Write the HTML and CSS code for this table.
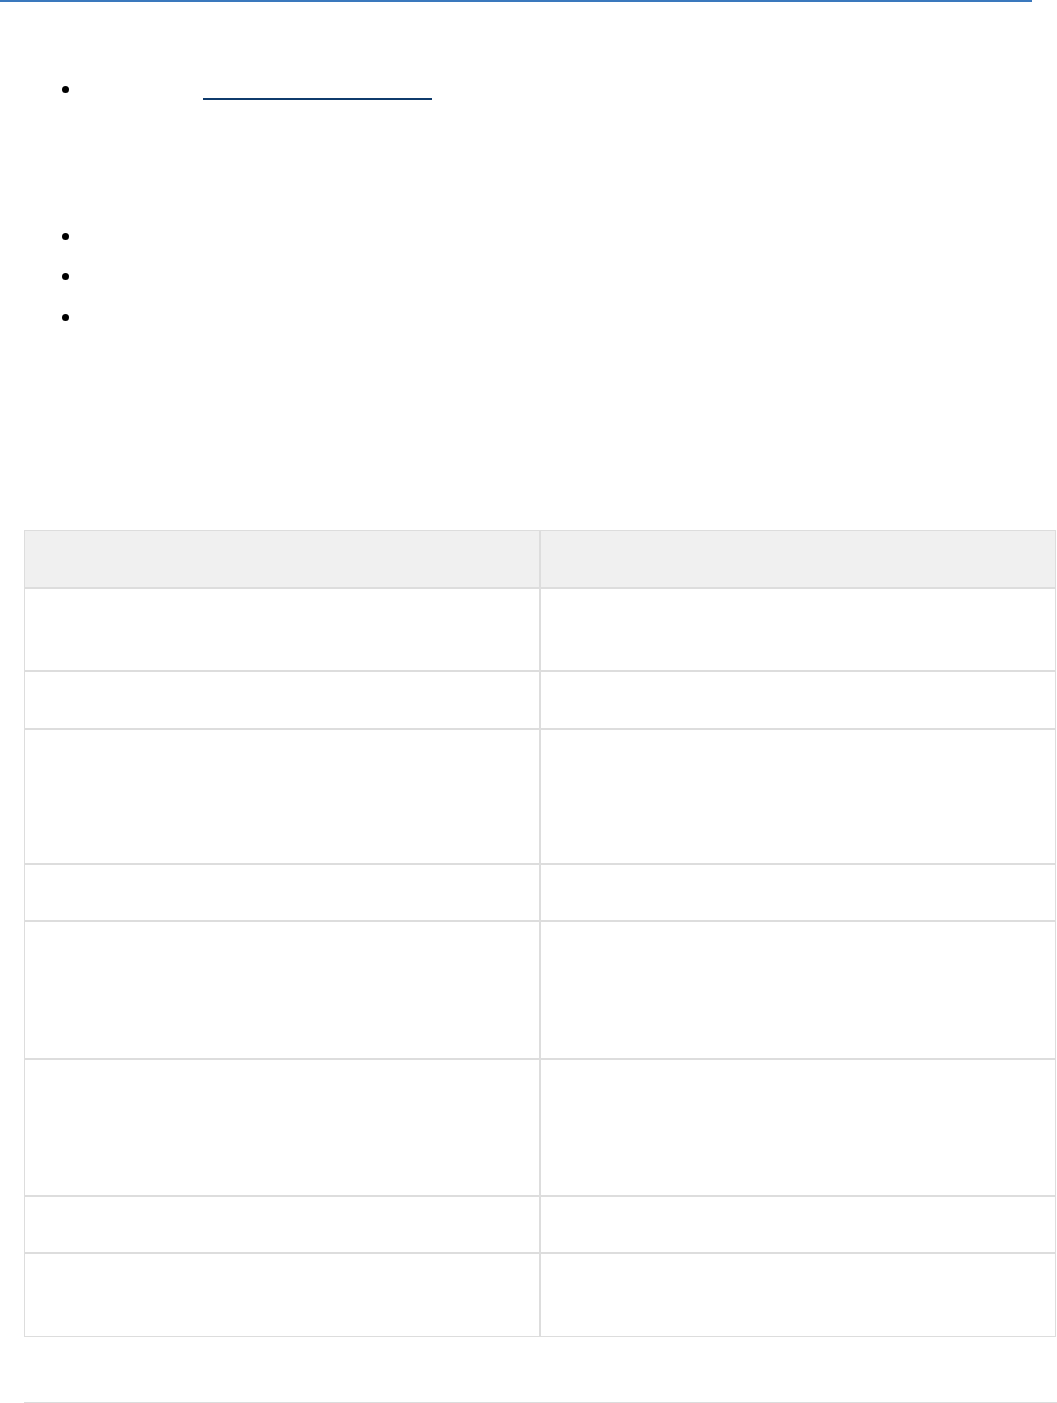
FILE: index.html
```html
<!DOCTYPE html>
<html lang="en">
<head>
<meta charset="utf-8">
<title>Page</title>
<link rel="stylesheet" href="styles.css">
</head>
<body>
<div class="topbar"></div>
<main class="page">
  <ul class="list list-first">
    <li class="item"><span class="dot"></span><a class="link" href="#"></a></li>
  </ul>
  <ul class="list list-second">
    <li class="item"><span class="dot"></span></li>
    <li class="item"><span class="dot"></span></li>
    <li class="item"><span class="dot"></span></li>
  </ul>
  <div class="grid-table">
    <div class="cell head"></div><div class="cell head"></div>
    <div class="cell"></div><div class="cell"></div>
    <div class="cell"></div><div class="cell"></div>
    <div class="cell"></div><div class="cell"></div>
    <div class="cell"></div><div class="cell"></div>
    <div class="cell"></div><div class="cell"></div>
    <div class="cell"></div><div class="cell"></div>
    <div class="cell"></div><div class="cell"></div>
    <div class="cell"></div><div class="cell"></div>
  </div>
  <div class="footer-rule"></div>
</main>
</body>
</html>
```

FILE: styles.css
```css
html, body {
  margin: 0;
  padding: 0;
  background: #ffffff;
  font-family: "Liberation Sans", Arial, sans-serif;
  font-size: 14px;
  color: #333;
}

.topbar {
  width: 1032px;
  height: 2px;
  background: #3a78bd;
}

.page {
  display: flex;
  flex-direction: column;
  padding-left: 24px;
}

.list {
  list-style: none;
  margin: 0;
  padding: 0;
  display: flex;
  flex-direction: column;
}

.list-first {
  margin-top: 77px;
}

.list-second {
  margin-top: 127px;
  gap: 20.5px;
}

.item {
  display: flex;
  align-items: center;
  height: 20px;
  padding-left: 38px;
}

.dot {
  width: 7px;
  height: 7px;
  border-radius: 50%;
  background: #000;
  flex: none;
}

.link {
  display: block;
  box-sizing: border-box;
  margin-left: 134px;
  width: 229px;
  height: 20px;
  margin-top: 2px;
  border-bottom: 2px solid #0f3b6c;
  text-decoration: none;
}

.grid-table {
  margin-top: 203px;
  width: 1032px;
  display: grid;
  grid-template-columns: 516px 516px;
  grid-template-rows: 58px 83px 58px 135px 57px 138px 137px 57px 84px;
}

.cell {
  box-sizing: border-box;
  border: 1px solid #dddddd;
  background: #ffffff;
}

.cell.head {
  background: #f0f0f0;
}

.footer-rule {
  margin-top: 65px;
  height: 1px;
  background: #dcdcdc;
}
```
